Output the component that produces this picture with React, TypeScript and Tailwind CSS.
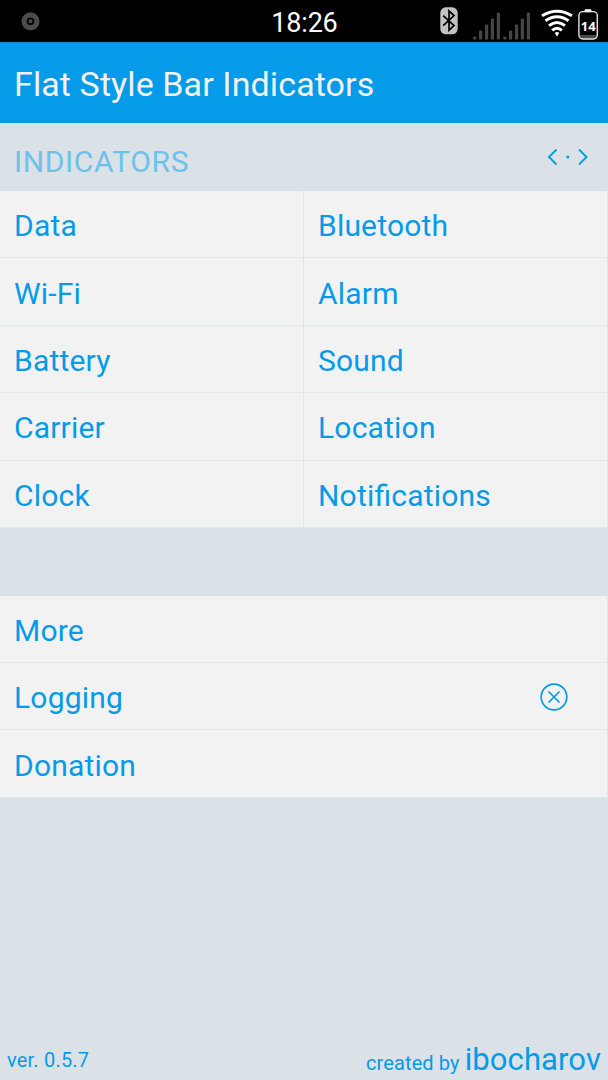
import clsx from "clsx";

const indicators = [
  "Data",
  "Bluetooth",
  "Wi-Fi",
  "Alarm",
  "Battery",
  "Sound",
  "Carrier",
  "Location",
  "Clock",
  "Notifications",
];

function BluetoothIcon() {
  return (
    <svg width="18" height="28" viewBox="0 0 18 28" className="shrink-0">
      <rect x="0.3" y="0.3" width="17.4" height="27" rx="5.5" fill="#c2c2c2" />
      <path d="M3.2 8.6 14 18.6 9 23.2V4L14 8.6 3.2 18.6" fill="none" stroke="#000" strokeWidth="1.7" />
    </svg>
  );
}

function SignalIcon() {
  return (
    <svg width="28" height="28" viewBox="0 0 28 28" fill="#454545" className="shrink-0">
      <rect x="0.2" y="24.5" width="3.2" height="3" rx="1" />
      <rect x="6" y="18.5" width="3.2" height="9" rx="1" />
      <rect x="12" y="12.5" width="3.2" height="15" rx="1" />
      <rect x="17.8" y="6.5" width="3.2" height="21" rx="1" />
      <rect x="23.8" y="0.5" width="3.2" height="27" rx="1" />
    </svg>
  );
}

function WifiIcon() {
  return (
    <svg width="32" height="28" viewBox="0 0 32 28" fill="none" stroke="#fff" strokeWidth="3" className="shrink-0">
      <path d="M1 6.8Q16 -2.5 31 6.8" />
      <path d="M4.5 11.8Q16 3.7 27.5 11.8" />
      <path d="M8 16.7Q16 10.3 24 16.7" />
      <path d="M11.2 21.3Q16 17.1 20.8 21.3" />
      <path d="M13.8 24.1Q16 22.1 18.2 24.1L16 27.8Z" fill="#fff" stroke="none" />
    </svg>
  );
}

function BatteryIcon() {
  return (
    <svg width="20" height="31" viewBox="0 0 20 31" className="shrink-0">
      <rect x="6.5" y="0.3" width="7" height="3" rx="1.2" fill="#fff" />
      <rect x="1.6" y="26" width="17" height="3.6" fill="#4a4a4a" />
      <rect x="0.9" y="2.6" width="18.4" height="27.4" rx="4" fill="none" stroke="#e4e4e4" strokeWidth="1.4" />
      <text x="10.2" y="22.2" textAnchor="middle" fill="#fff" fontSize="13" fontWeight="700" fontFamily="Open Sans, sans-serif">
        14
      </text>
    </svg>
  );
}

function StatusBar() {
  return (
    <div className="grid h-[42px] grid-cols-3 bg-black text-white">
      <div className="pl-[21px] pt-3">
        <svg width="19" height="19" viewBox="0 0 19 19">
          <circle cx="9.5" cy="9.3" r="9" fill="#4b4b4b" />
          <circle cx="9.5" cy="9.3" r="2.9" fill="none" stroke="#000" strokeWidth="1.8" />
        </svg>
      </div>
      <span className="pl-px text-center text-[27px] leading-[46px] tracking-[-0.2px]">18:26</span>
      <div className="flex items-start justify-end pr-2.5">
        <div className="mr-[15px] mt-[7px]"><BluetoothIcon /></div>
        <div className="mr-[2px] mt-[11.5px]"><SignalIcon /></div>
        <div className="mr-[10px] mt-[11.5px]"><SignalIcon /></div>
        <div className="mr-[5px] mt-[9px]"><WifiIcon /></div>
        <div className="mt-[9px]"><BatteryIcon /></div>
      </div>
    </div>
  );
}

function Cell({ label, className, children }: { label: string; className?: string; children?: React.ReactNode }) {
  return (
    <div className={clsx("flex items-center justify-between border-b border-r border-[#e2e7e8] bg-[#f2f2f2] pl-3.5 pt-1", className)}>
      <span className="text-[30px] leading-none tracking-[0.2px] [font-feature-settings:'liga']">{label}</span>
      {children}
    </div>
  );
}

export default function App() {
  return (
    <main className="flex h-[1080px] w-[608px] flex-col overflow-hidden bg-[#dae1e7] font-[Roboto,sans-serif] text-[#059be8]">
      <StatusBar />
      <header className="h-[81px] border-t border-[#0b84c6] bg-[#059be8] pl-3.5 text-[#f2f2f2]">
        <h1 className="text-[34px] leading-[82px] tracking-[0.1px]">Flat Style Bar Indicators</h1>
      </header>

      <div className="flex h-[68px] items-center justify-between pl-3.5 pr-[19px]">
        <h2 className="pt-[9px] text-[30px] leading-none tracking-[0.6px] text-[#6dc1eb]">INDICATORS</h2>
        <svg width="42" height="18" viewBox="0 0 42 18" fill="none" stroke="#059be8" strokeWidth="1.9">
          <path d="M9.5 1.5 2 9l7.5 7.5M32 1.5 39.5 9 32 16.5" />
          <circle cx="20.8" cy="9" r="1.5" fill="#059be8" stroke="none" />
        </svg>
      </div>

      <section className="grid h-[337px] grid-cols-2 grid-rows-5">
        {indicators.map((name) => (
          <Cell key={name} label={name} />
        ))}
      </section>

      <section className="mt-[67.6px] grid h-[202.2px] grid-rows-3">
        <Cell label="More" />
        <Cell label="Logging">
          <svg width="28" height="28" viewBox="0 0 28 28" fill="none" stroke="#059be8" strokeWidth="1.7" className="mr-[39px] -mt-[3px]">
            <circle cx="14" cy="14" r="12.8" />
            <path d="m8.5 8.5 11 11m0-11-11 11" />
          </svg>
        </Cell>
        <Cell label="Donation" />
      </section>

      <footer className="mt-auto flex items-baseline justify-between pl-[7px] pr-[7px]">
        <span className="relative -top-[3px] text-[20px] leading-none tracking-[0.2px]">ver. 0.5.7</span>
        <span className="text-[20px] leading-[33px] tracking-[0.1px]">
          created by <span className="text-[31px]">ibocharov</span>
        </span>
      </footer>
    </main>
  );
}
